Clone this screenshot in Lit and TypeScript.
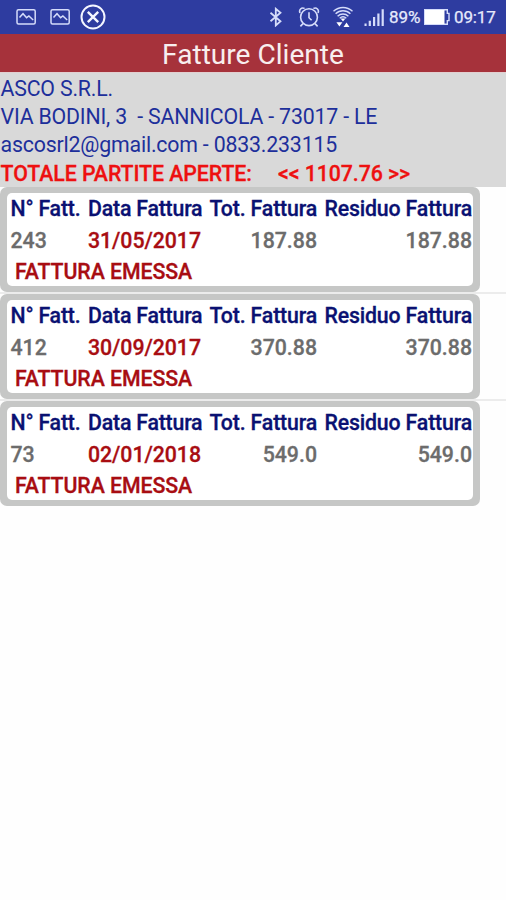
import { LitElement, html, css } from "lit";
import { customElement, property } from "lit/decorators.js";

interface Invoice {
  number: string;
  date: string;
  total: string;
  residual: string;
  status: string;
}

@customElement("status-bar")
class StatusBar extends LitElement {
  static styles = css`
    :host {
      display: flex;
      align-items: center;
      justify-content: space-between;
      height: 34px;
      background: #2e3ca0;
      color: #e6eafc;
      font-size: 17px;
      line-height: 36px;
      -webkit-text-stroke: 0.25px #e6eafc;
    }
    .left,
    .right {
      display: flex;
      align-items: center;
      height: 34px;
    }
    .left { padding-left: 16px; }
    .right { padding-right: 10px; }
    svg { display: block; fill: none; stroke: #d5dcfa; flex: none; }
    .picture { margin-right: 13px; }
    .close { stroke: #f4f6ff; margin-left: -5px; }
    .bluetooth { margin-right: 15px; }
    .alarm { margin-right: 12px; }
    .wifi { margin-right: 10px; }
    .signal { margin-right: 4px; }
    .solid { fill: #fff; stroke: none; }
    .bars { fill: #d5dcfa; stroke: none; }
    .level { width: 35px; letter-spacing: -0.1px; }
    .battery { margin-right: 4px; }
    .clock { width: 42px; white-space: nowrap; letter-spacing: -0.15px; }
  `;

  private picture() {
    return html`<svg class="picture" width="21" height="18" viewBox="0 0 21 18" stroke-width="1.5">
      <rect x="1" y="1.7" width="18.2" height="14.4" rx="1.5"></rect>
      <path d="M3.5 9.5 7 5.7l3.6 4 2.3-1.8 4.3 4.1"></path>
    </svg>`;
  }

  render() {
    return html`
      <div class="left">
        ${this.picture()}${this.picture()}
        <svg class="close" width="28" height="28" viewBox="0 0 28 28" stroke-width="2">
          <circle cx="14" cy="14" r="11.5"></circle>
          <path d="m8.8 8.8 10.4 10.4M19.2 8.8 8.8 19.2" stroke-width="2.4"></path>
        </svg>
      </div>
      <div class="right">
        <svg class="bluetooth" width="14" height="20" viewBox="0 0 14 20" stroke-width="1.8">
          <path d="m1.5 5.8 10 8.4L6.8 18.4V1.8l4.7 4-10 8.4"></path>
        </svg>
        <svg class="alarm" width="22" height="22" viewBox="0 0 22 22" stroke-width="1.6">
          <circle cx="11" cy="11.2" r="8.4"></circle>
          <path d="M11 6.3v5.4l2.6 2.6M2 7C.6 3.8 3.4 1 6.6 2.4M20 7c1.4-3.2-1.4-6-4.6-4.6M5 17.6l-2.6 2.8M17 17.6l2.6 2.8"></path>
        </svg>
        <svg class="wifi" width="22" height="22" viewBox="0 0 22 22" stroke-width="1.4">
          <path d="M1.5 5.2C7 .2 15 .2 20.5 5.2M3.6 7.8c4.2-4 10.6-4 14.8 0M5.6 10.3c3.1-3 7.7-3 10.8 0M7.7 12.3c1.9-1.7 4.7-1.7 6.6 0"></path>
          <path class="solid" d="m8.6 12.5 2.4 3 2.4-3zM4.4 16.2h6l-3 4.4zM11.5 21l3-4.6 3 4.6z"></path>
        </svg>
        <svg class="signal" width="21" height="19" viewBox="0 0 21 19">
          <path class="bars" d="M.5 15.5h2.1V18H.5zM4.7 12.7h2.2V18H4.7zM9 9h2.2v9H9zM13.3 5.4h2.2V18h-2.2zM17.6 1.2h2.2V18h-2.2z"></path>
        </svg>
        <span class="level">89%</span>
        <svg class="battery" width="26" height="18" viewBox="0 0 26 18">
          <path d="M.7 1.7h22.6v3.7H25v7.2h-1.7v3.7H.7z" stroke-width="1.4"></path>
          <path class="solid" d="M1 2h19.5v14H1z"></path>
        </svg>
        <span class="clock">09:17</span>
      </div>
    `;
  }
}

@customElement("invoice-card")
class InvoiceCard extends LitElement {
  @property({ attribute: false }) invoice!: Invoice;

  static styles = css`
    :host {
      display: block;
      box-sizing: border-box;
      width: 480px;
      height: 105px;
      padding: 6px 7px;
      border-radius: 7px;
      background: #c6c7c6;
      font-size: 21.3px;
      font-weight: 500;
      line-height: 31px;
      white-space: nowrap;
      -webkit-text-stroke: 0.3px currentColor;
    }
    .panel {
      height: 92.5px;
      border-radius: 5px;
      background: #fff;
    }
    .grid {
      display: grid;
      grid-template-columns: 77.5px 115px 114px 155px;
      grid-template-rows: 32px 31px;
      padding-left: 3.5px;
    }
    .head { color: #0a1172; letter-spacing: -0.2px; }
    .value { color: #6c6c6c; letter-spacing: 0; }
    .date { color: #a80d12; letter-spacing: -0.05px; }
    .amount { justify-self: end; }
    .head.amount { letter-spacing: -0.16px; }
    .value.amount { letter-spacing: 0; }
    .status { padding-left: 8px; color: #a80d12; letter-spacing: -0.08px; }
  `;

  render() {
    const i = this.invoice;
    return html`
      <div class="panel">
        <div class="grid">
          <span class="head">N° Fatt.</span>
          <span class="head">Data Fattura</span>
          <span class="head amount">Tot. Fattura</span>
          <span class="head amount">Residuo Fattura</span>
          <span class="value">${i.number}</span>
          <span class="date">${i.date}</span>
          <span class="value amount">${i.total}</span>
          <span class="value amount">${i.residual}</span>
        </div>
        <div class="status">${i.status}</div>
      </div>
    `;
  }
}

@customElement("app-root")
class AppRoot extends LitElement {
  static styles = css`
    :host {
      display: block;
      width: 506px;
      height: 900px;
      overflow: hidden;
      background: #fefefe;
      font-family: Roboto, "Liberation Sans", sans-serif;
    }
    .title {
      height: 38px;
      background: #a6323b;
      color: #f8eeee;
      font-size: 28.1px;
      line-height: 41px;
      text-align: center;
      white-space: nowrap;
    }
    .customer {
      box-sizing: border-box;
      height: 115px;
      padding: 1.5px 0 0 0.5px;
      border-top: 1px solid #e2cfd0;
      background: #d9d9d9;
      color: #1d2f9b;
      font-size: 21.3px;
      line-height: 28.4px;
      letter-spacing: -0.18px;
      white-space: pre;
    }
    .total {
      display: flex;
      color: #ee1010;
      font-weight: 500;
      letter-spacing: -0.06px;
      -webkit-text-stroke: 0.3px currentColor;
    }
    .sum { margin-left: 26px; }
    .row { height: 107px; box-sizing: border-box; }
    .row:not(:last-child) {
      border-bottom: 2px solid #ececec;
    }
  `;

  private invoices: Invoice[] = [
    { number: "243", date: "31/05/2017", total: "187.88", residual: "187.88", status: "FATTURA EMESSA" },
    { number: "412", date: "30/09/2017", total: "370.88", residual: "370.88", status: "FATTURA EMESSA" },
    { number: "73", date: "02/01/2018", total: "549.0", residual: "549.0", status: "FATTURA EMESSA" },
  ];

  render() {
    return html`
      <status-bar></status-bar>
      <div class="title">Fatture Cliente</div>
      <div class="customer"><div>ASCO S.R.L.</div><div>VIA BODINI, 3  - SANNICOLA - 73017 - LE</div><div>ascosrl2@gmail.com - 0833.233115</div><div class="total"><span>TOTALE PARTITE APERTE:</span><span class="sum">&lt;&lt; 1107.76 &gt;&gt;</span></div></div>
      <div>
        ${this.invoices.map((invoice) => html`<div class="row"><invoice-card .invoice=${invoice}></invoice-card></div>`)}
      </div>
    `;
  }
}
